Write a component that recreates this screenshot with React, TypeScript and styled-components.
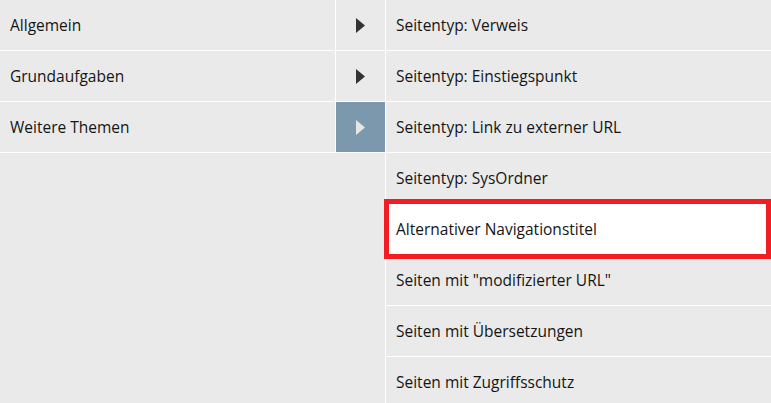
import React from "react";
import styled, { createGlobalStyle } from "styled-components";

const GlobalStyle = createGlobalStyle`
  html, body {
    margin: 0;
    padding: 0;
    background: #eaeaea;
    overflow: hidden;
  }
  body {
    font-family: "Open Sans", "Noto Sans", sans-serif;
    font-size: 15.5px;
    font-weight: 500;
    color: #151515;
  }
`;

const Page = styled.div`
  display: flex;
  height: 403px;
  width: 771px;
`;

const LeftPane = styled.div`
  width: 385px;
  border-right: 1px solid #fff;
  display: flex;
  flex-direction: column;
`;

const RightPane = styled.div`
  flex: 1;
  display: flex;
  flex-direction: column;
`;

const Row = styled.div<{ $highlight?: boolean }>`
  display: flex;
  height: 50px;
  flex-shrink: 0;
  border-bottom: 1px solid #fff;
  position: relative;
  background: ${(p) => (p.$highlight ? "#fff" : "transparent")};

  ${(p) =>
    p.$highlight &&
    `
    &::after {
      content: "";
      position: absolute;
      top: -5px;
      bottom: -5px;
      left: -2px;
      right: 0;
      border: 5px solid #f21d23;
      pointer-events: none;
    }
  `}
`;

const Label = styled.div`
  flex: 1;
  display: flex;
  align-items: center;
  padding-left: 10px;
  padding-bottom: 1px;
  white-space: nowrap;
`;

const ArrowCell = styled.div<{ $active?: boolean }>`
  width: 49px;
  border-left: 1px solid #fff;
  display: flex;
  align-items: center;
  justify-content: center;
  background: ${(p) => (p.$active ? "#7b98ac" : "transparent")};
  color: ${(p) => (p.$active ? "#e6e6e6" : "#333")};
`;

const Arrow = () => (
  <svg width="9" height="15" viewBox="0 0 9 15">
    <path d="M0 0 L9 7.5 L0 15 Z" fill="currentColor" />
  </svg>
);

const categories = [
  { label: "Allgemein" },
  { label: "Grundaufgaben" },
  { label: "Weitere Themen", active: true },
];

const topics = [
  "Seitentyp: Verweis",
  "Seitentyp: Einstiegspunkt",
  "Seitentyp: Link zu externer URL",
  "Seitentyp: SysOrdner",
  "Alternativer Navigationstitel",
  'Seiten mit "modifizierter URL"',
  "Seiten mit Übersetzungen",
  "Seiten mit Zugriffsschutz",
];

export default function App() {
  return (
    <>
      <GlobalStyle />
      <Page>
        <LeftPane>
          {categories.map((c) => (
            <Row key={c.label}>
              <Label>{c.label}</Label>
              <ArrowCell $active={c.active}>
                <Arrow />
              </ArrowCell>
            </Row>
          ))}
        </LeftPane>
        <RightPane>
          {topics.map((t, i) => (
            <Row key={t} $highlight={i === 4}>
              <Label>{t}</Label>
            </Row>
          ))}
        </RightPane>
      </Page>
    </>
  );
}
